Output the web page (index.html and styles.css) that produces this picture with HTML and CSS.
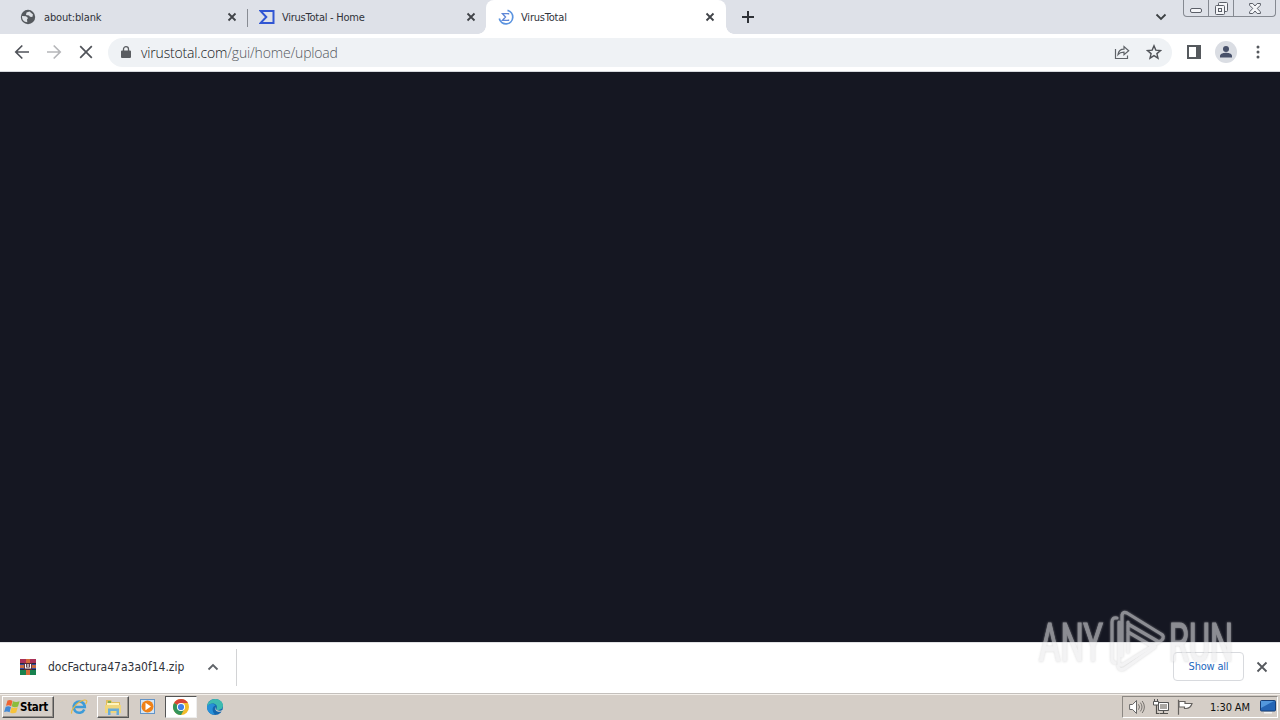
FILE: index.html
```html
<!DOCTYPE html>
<html lang="en">
<head>
    <meta charset="UTF-8">
    <meta name="viewport" content="width=device-width, initial-scale=1.0">
    <title>VirusTotal</title>
    <link rel="stylesheet" href="styles.css">
</head>
<body>
    <div class="tab-strip">
        <div class="tab first">
            <svg class="favicon" viewBox="0 0 16 16"><circle cx="8" cy="8" r="7.2" fill="#55595e"/><path d="M2 7l4 .3 2 1.700-1 1.500.3 2.800C4 13 2 11 2 7zM6.500 3.500l3-1 3.500 3-.7 2.500-2.300-.3-1-1.200-3-.5z" fill="#dee1e6"/></svg>
            <span class="tab-title blank-title">about:blank</span>
            <svg class="tab-close" viewBox="0 0 10 10"><path d="M1.500 1.500l7 7M8.500 1.500l-7 7"/></svg>
        </div>
        <div class="tab second">
            <svg class="favicon" viewBox="0 0 16 16"><path d="M1.500 1.900h13v12.200h-13L7.300 8z" fill="none" stroke="#3156d3" stroke-width="2"/></svg>
            <span class="tab-title home-title">VirusTotal - Home</span>
            <svg class="tab-close" viewBox="0 0 10 10"><path d="M1.500 1.500l7 7M8.500 1.500l-7 7"/></svg>
        </div>
        <div class="tab active">
            <svg class="favicon" viewBox="0 0 16 16"><path d="M9.500 1.400A6.800 6.800 0 1 1 1.300 9.500" fill="none" stroke="#5b94e0" stroke-width="1.700"/><path d="M10.500 5.500V4.600H4.500L7.500 8l-3 3.400h6v-.9" fill="none" stroke="#5f87d6" stroke-width="1.400"/></svg>
            <span class="tab-title vt-title">VirusTotal</span>
            <svg class="tab-close" viewBox="0 0 10 10"><path d="M1.500 1.500l7 7M8.500 1.500l-7 7"/></svg>
        </div>
        <svg class="new-tab" viewBox="0 0 12 12"><path d="M6 0v12M0 6h12" stroke="#2f3237" stroke-width="2"/></svg>
        <svg class="tab-search" viewBox="0 0 12 8"><path d="M1.500 1.500L6 6l4.500-4.500" fill="none" stroke="#3c4043" stroke-width="1.800"/></svg>
        <div class="window-buttons">
            <div class="window-button minimize"><svg width="12" height="5" viewBox="0 0 12 5"><rect x=".5" y=".5" width="11" height="4" rx="1.500"/></svg></div>
            <div class="window-button restore"><svg width="13" height="13" viewBox="0 0 13 13"><rect x="3.500" y=".5" width="9" height="9" rx="1"/><rect x=".5" y="3.500" width="9" height="9" rx="1"/><rect x="3.500" y="6.500" width="3" height="3"/></svg></div>
            <div class="window-button close"><svg width="12" height="11" viewBox="0 0 12 11"><path d="M.6.500h3.200L6 3 8.200.5h3.200v1.800L8.200 5.500l3.200 3.200v1.800H8.200L6 8l-2.200 2.500H.6V8.700l3.200-3.200L.6 2.300z"/></svg></div>
        </div>
    </div>

    <div class="toolbar">
        <svg class="nav-icon back" viewBox="0 0 16 16"><path d="M15 8H2M8.300 1.500L1.800 8l6.500 6.500"/></svg>
        <svg class="nav-icon forward" viewBox="0 0 16 16"><path d="M1 8h13M7.700 1.500L14.200 8l-6.500 6.500"/></svg>
        <svg class="nav-icon stop" viewBox="0 0 16 16"><path d="M2.200 2.200l11.600 11.600M13.800 2.200L2.200 13.800"/></svg>
        <div class="omnibox">
            <svg class="lock" viewBox="0 0 10 12"><path d="M1 4.500h8a1 1 0 0 1 1 1V11a1 1 0 0 1-1 1H1a1 1 0 0 1-1-1V5.500a1 1 0 0 1 1-1z" fill="#5a5d61"/><path d="M2.500 5V3a2.500 2.300 0 0 1 5 0v2" fill="none" stroke="#5a5d61" stroke-width="1.300"/></svg>
            <span class="url"><span class="host">virustotal.com</span>/gui/home/upload</span>
            <svg class="share" viewBox="0 0 16 16"><path d="M1.500 5v9.500h12v-3M4 10.500C4.500 7 6.500 5.200 10 5.200V2.500l4.700 4.200L10 10.800V8.200c-2.800 0-4.600.6-6 2.300z" fill="none" stroke="#5f6368" stroke-width="1.200"/></svg>
            <svg class="star" viewBox="0 0 16 16"><path d="M8 1.800l1.800 4.300 4.700.4-3.600 3.100 1.100 4.600L8 11.700l-4 2.500 1.100-4.600-3.600-3.100 4.700-.4z" fill="none" stroke="#505358" stroke-width="1.400"/></svg>
        </div>
        <svg class="side-panel" viewBox="0 0 14 14"><rect x="1" y="1" width="12" height="12" fill="none" stroke="#55595d" stroke-width="2"/><path d="M9 1h4v12H9z" fill="#55595d"/></svg>
        <svg class="avatar" viewBox="0 0 22 22"><circle cx="11" cy="11" r="11" fill="#dadde3"/><circle cx="11" cy="8" r="3" fill="#475069"/><path d="M5 16.500v-1.700c0-2.300 4-3.100 6-3.100s6 .8 6 3.100v1.700z" fill="#475069"/></svg>
        <svg class="menu" viewBox="0 0 4 14"><circle cx="2" cy="2" r="1.500"/><circle cx="2" cy="7" r="1.500"/><circle cx="2" cy="12" r="1.500"/></svg>
    </div>

    <div class="page"></div>

    <div class="downloads">
        <svg class="zip-icon" viewBox="0 0 16 16">
            <path d="M0 0h16v5H0z" fill="#aa3158"/><path d="M0 5h16v6H0z" fill="#364ca5"/><path d="M0 11h16v5H0z" fill="#18824f"/>
            <path d="M0 4h16v1H0zM0 10h16v1H0z" fill="#26263b"/>
            <path d="M6 0h4v16H6z" fill="#d56b3b"/><path d="M0 6h16v3H0z" fill="#c86b42"/>
            <rect x="4" y="4" width="8" height="7" fill="#552a35"/><path d="M5.500 5v4h5V5M8 5v3" fill="none" stroke="#fff" stroke-width="1.200"/>
        </svg>
        <span class="file-name">docFactura47a3a0f14.zip</span>
        <svg class="file-menu" viewBox="0 0 12 8"><path d="M1.500 6.500L6 2l4.500 4.500" fill="none" stroke="#5f6368" stroke-width="1.800"/></svg>
        <div class="show-all">Show all</div>
        <svg class="shelf-close" viewBox="0 0 12 12"><path d="M1.500 1.500l9 9M10.500 1.500l-9 9" stroke="#55585d" stroke-width="1.800"/></svg>
    </div>

    <div class="taskbar">
        <div class="start-button">
            <svg class="windows-logo" viewBox="0 0 16 16"><path d="M3.500 1.500c2-1 3.500-.7 5 .4L7.200 7.300C5.500 6 4 6 2 6.800z" fill="#ef6432"/><path d="M9 2.300c2 1 4 1 6.600 0l-1.600 5.200c-2 .9-4.300.9-6.300-.2z" fill="#8bbd3d"/><path d="M1.700 7.700c2-.8 3.800-.7 5.300.4l-1.400 5.200C4 12.200 2.200 12.100.1 13z" fill="#4389d5"/><path d="M7.600 8.200c2 1 4.100.9 6.100 0l-1.500 5.400c-2 .9-4.200.9-6.100-.2z" fill="#f7c33b"/></svg>
            <span>Start</span>
        </div>
        <div class="task-item ie">
            <svg viewBox="0 0 18 18"><path d="M14.300 11.500A5.600 5.600 0 1 1 14.800 9H5" fill="none" stroke="#3d9bd8" stroke-width="2.600"/><path d="M2 15.500C-.5 14 7 3 14.500 2c4-.2 1.800 3 1.100 4" fill="none" stroke="#e6b944" stroke-width="1.200"/></svg>
        </div>
        <div class="task-item raised explorer">
            <svg viewBox="0 0 18 18"><path d="M2 2h5l1 2h8v11H2z" fill="#e0bd5c"/><path d="M3 5h12v3H3z" fill="#fff4bd"/><path d="M1 7h16v8H1z" fill="#f0d67c"/><path d="M4 17v-6.500h11V17h-2.500v-4h-6v4z" fill="#69acd8"/><path d="M4 4h3" stroke="#62a94f" stroke-width="1.500"/></svg>
        </div>
        <div class="task-item media">
            <svg viewBox="0 0 18 18"><rect x="1.500" y="1.500" width="14" height="14" fill="#d4e5f5" stroke="#6394c7"/><circle cx="8.500" cy="8.500" r="6" fill="#ef8117"/><path d="M6.500 4.800l5.500 3.700-5.500 3.700z" fill="#fff"/></svg>
        </div>
        <div class="task-item pressed chrome">
            <svg viewBox="0 0 18 18"><circle cx="9" cy="9" r="8" fill="#f3bc2b"/><path d="M9 9L2.070 5A8 8 0 0 1 15.930 5H9z" fill="#d84438"/><path d="M9 9L2.070 5A8 8 0 0 0 9 17l3.400-6z" fill="#34945b"/><circle cx="9" cy="9" r="4.100" fill="#fff"/><circle cx="9" cy="9" r="3.100" fill="#4280e8"/></svg>
        </div>
        <div class="task-item edge">
            <svg viewBox="0 0 18 18"><circle cx="9" cy="9" r="8" fill="#1466ae"/><path d="M1 8.500C1.500 4 5 1 9.300 1c4.500 0 7.700 3 7.700 6.600 0 2.800-2 4.400-4.500 4.400-1.500 0-2.500-.5-2-1.300C12 8 9.500 5.500 7 5.500 4 5.500 2 7 1 8.500z" fill="#3dbbb0"/><path d="M1 8.500C3 5 8 5 9.500 7.500 6 8 5.500 13 9 16.500 4 17 .7 13 1 8.500z" fill="#2790d8"/><path d="M10.300 8.500c-1 1-.8 2.700.5 3.500 2 1.200 5 .8 7.200-.8v1.600c-3 1.600-7 1.200-8.200-.6-.9-1.400-.6-2.900.5-3.700z" fill="#d4d0c8"/></svg>
        </div>
        <div class="tray">
            <svg class="volume" viewBox="0 0 16 16"><path d="M.6 5.500h3L7.500 1.500v13L3.600 10.500h-3z" fill="#fff" stroke="#666"/><path d="M9.500 5.300q2 2.700 0 5.400M11.400 3.600q3.200 4.400 0 8.800M13.200 2q4.400 6 0 12" fill="none" stroke="#77736f"/></svg>
            <svg class="network" viewBox="0 0 16 16"><path d="M5.500 3.500h10v8h-10z" fill="#aaa7a3" stroke="#555"/><path d="M6.500 4.500h8v6h-8z" fill="none" stroke="#fff"/><path d="M7 14.500h8M10.500 12v2M3.500 5v9.500h3" fill="none" stroke="#504e4b" stroke-width="1.200"/><path d="M.5 2.500h5v3.500h-5zM1.500 0v2M4.500 0v2" fill="#fff" stroke="#555"/></svg>
            <svg class="flag" viewBox="0 0 16 16"><path d="M1.500.8v15M2 2.500h6v2h7q-1.500 5-6 5H7.500V8H2z" fill="#fff" stroke="#65625f" stroke-width="1.200"/></svg>
            <span class="clock">1:30 AM</span>
            <svg class="desktop" viewBox="0 0 16 14"><rect x=".5" y=".5" width="15" height="10.500" rx="1" fill="#2565b5" stroke="#173e77"/><path d="M1 1h13L1 8z" fill="#5398dd"/><path d="M4 12h8v1.500H4z" fill="#f2f2f2"/></svg>
        </div>
    </div>

    <svg class="watermark" viewBox="0 0 200 75">
        <g class="watermark-text">
            <text x="3" y="54.500" textLength="64" lengthAdjust="spacingAndGlyphs">ANY</text>
            <text x="133" y="54.500" textLength="64" lengthAdjust="spacingAndGlyphs">RUN</text>
        </g>
        <g class="watermark-logo">
            <path d="M81 12q-5-1-5 4v37q0 3 3 4"/>
            <path d="M86 50V9q1-4 5-2l34 21q4 2 1 6L88 58q-3 2-5 0V16"/>
            <path d="M92 16v30M92 18l31 18M92 26l24 14M119 41L88 63q-5 2-6-3"/>
        </g>
    </svg>
</body>
</html>
```

FILE: styles.css
```css
body {
    margin: 0;
    width: 1280px;
    height: 720px;
    display: flex;
    flex-direction: column;
    position: relative;
    overflow: hidden;
    background: #fff;
    color: #30333a;
    font-family: "DejaVu Sans Condensed", "DejaVu Sans", sans-serif;
    font-size: 11px;
}
svg {
    display: block;
    flex: none;
}
.tab-strip {
    display: flex;
    height: 34px;
    flex: none;
    background: #dee1e8;
}
.tab {
    display: flex;
    align-items: center;
    box-sizing: border-box;
    height: 34px;
}
.first {
    width: 247px;
    padding-left: 20px;
    padding-right: 10px;
}
.second {
    width: 239px;
    padding-left: 12px;
    padding-right: 10px;
    background: linear-gradient(#888c93, #888c93) 0 9px / 1px 18px no-repeat;
}
.active {
    width: 240px;
    padding-left: 12px;
    padding-right: 11px;
    background: #fff;
    border-radius: 8px 8px 0 0;
    position: relative;
}
/* curved feet of the selected tab */
.active::before,
.active::after {
    content: "";
    position: absolute;
    bottom: 0;
    width: 8px;
    height: 8px;
}
.active::before {
    left: -8px;
    background: radial-gradient(circle at 0 0, transparent 7.5px, #fff 8px);
}
.active::after {
    right: -8px;
    background: radial-gradient(circle at 100% 0, transparent 7.5px, #fff 8px);
}
.favicon {
    width: 16px;
    height: 16px;
    margin-right: 7px;
}
.tab-title {
    flex: 1;
    white-space: nowrap;
}
.blank-title {
    padding-left: 1px;
    letter-spacing: -0.15px;
}
.home-title {
    letter-spacing: -0.25px;
}
.vt-title {
    letter-spacing: -0.2px;
}
.tab-close {
    width: 10px;
    height: 10px;
    stroke: #404348;
    stroke-width: 1.8;
}
.new-tab {
    width: 12px;
    height: 12px;
    margin: 11px 0 0 16px;
}
.tab-search {
    width: 12px;
    height: 8px;
    margin: 13px 16px 0 auto;
}
.window-buttons {
    display: flex;
    box-sizing: border-box;
    width: 93px;
    height: 17px;
    margin-right: 4px;
    border: 1px solid #858991;
    border-top: 0;
    border-radius: 0 0 4px 4px;
}
.window-button {
    display: flex;
    justify-content: center;
    align-items: center;
}
.window-button svg {
    fill: #f4f5f8;
    stroke: #5b5f68;
}
.minimize {
    width: 24px;
    padding-top: 4px;
}
.restore {
    width: 24px;
    border-left: 1px solid #858991;
    border-right: 1px solid #858991;
}
.close {
    flex: 1;
}
.toolbar {
    display: flex;
    align-items: center;
    box-sizing: border-box;
    height: 38px;
    flex: none;
    padding: 0 20px 1px 14px;
    border-bottom: 1px solid #d6d8dd;
}
.nav-icon {
    width: 16px;
    height: 16px;
    margin-right: 16px;
    fill: none;
    stroke: #505359;
    stroke-width: 1.7;
}
.forward {
    stroke: #b5b6b9;
}
.stop {
    margin-right: 14px;
}
.omnibox {
    display: flex;
    align-items: center;
    box-sizing: border-box;
    width: 1064px;
    height: 29px;
    padding: 0 10px 0 13px;
    border-radius: 15px;
    background: #eff2f5;
}
.lock {
    width: 10px;
    height: 12px;
    margin-right: 10px;
}
.url {
    flex: 1;
    font: 300 14px "Open Sans", "Noto Sans", sans-serif;
    letter-spacing: -0.17px;
    color: #55595e;
}
.host {
    color: #15171a;
}
.share {
    width: 16px;
    height: 16px;
    margin-right: 16px;
}
.star {
    width: 16px;
    height: 16px;
}
.side-panel {
    width: 14px;
    height: 14px;
    margin: 0 14px 0 15px;
}
.avatar {
    width: 22px;
    height: 22px;
    margin-right: 19px;
}
.menu {
    width: 4px;
    height: 14px;
    fill: #55585d;
}
.page {
    flex: 1;
    background: #151722;
}
.downloads {
    display: flex;
    align-items: center;
    box-sizing: border-box;
    height: 51px;
    flex: none;
    padding: 0 12px 3px 20px;
    background: linear-gradient(#d2d3d5, #d2d3d5) 236px 6px / 1px 37px no-repeat, #fff;
    border-top: 1px solid #e1e2e4;
}
.zip-icon {
    width: 16px;
    height: 16px;
    margin-right: 12px;
}
.file-name {
    width: 137px;
    margin-right: 22px;
    font-size: 12px;
    white-space: nowrap;
}
.file-menu {
    width: 12px;
    height: 8px;
}
.show-all {
    box-sizing: border-box;
    width: 71px;
    height: 29px;
    margin-left: auto;
    margin-right: 12px;
    border: 1px solid #d8dade;
    border-radius: 4px;
    color: #2468bd;
    letter-spacing: -0.2px;
    line-height: 27px;
    text-align: center;
}
.shelf-close {
    width: 12px;
    height: 12px;
}
.taskbar {
    display: flex;
    align-items: flex-start;
    box-sizing: border-box;
    height: 27px;
    flex: none;
    padding: 2px 2px 0;
    background: #d5cec7;
    border-top: 1px solid #c4c0bc;
    box-shadow: inset 0 1px #f4f0eb;
}
.start-button {
    display: flex;
    align-items: center;
    box-sizing: border-box;
    width: 52px;
    height: 22px;
    padding-left: 1px;
    border: 1px solid;
    border-color: #fff #555 #555 #fff;
    box-shadow: inset -1px -1px #96918b;
    color: #000;
    font: bold 11.5px "DejaVu Sans Condensed", "DejaVu Sans", sans-serif;
    letter-spacing: -0.3px;
}
.windows-logo {
    width: 16px;
    height: 16px;
}
.task-item {
    display: flex;
    align-items: center;
    justify-content: center;
    box-sizing: border-box;
    height: 22px;
    width: 32px;
    border: 1px solid transparent;
}
.task-item svg {
    width: 18px;
    height: 18px;
}
.ie {
    margin-left: 9px;
}
.explorer {
    margin-left: 2px;
}
.media {
    margin-left: 3px;
}
.chrome {
    margin-left: 1px;
}
.edge {
    margin-left: 2px;
}
.raised {
    border-color: #fff #555 #555 #fff;
    box-shadow: inset -1px -1px #96918b;
}
.pressed {
    background: #fff;
    border-color: #555 #eee #eee #555;
}
.tray {
    display: flex;
    align-items: center;
    box-sizing: border-box;
    width: 156px;
    height: 22px;
    margin-left: auto;
    padding-left: 6px;
    border: 1px solid;
    border-color: #8c8883 #fff #fff #8c8883;
    color: #111;
}
.volume,
.network,
.flag {
    width: 16px;
    height: 16px;
    margin-right: 8px;
}
.clock {
    width: 43px;
    margin: 0 7px 0 9px;
    white-space: nowrap;
    letter-spacing: -0.1px;
}
.desktop {
    width: 16px;
    height: 14px;
}
/* sits over both the page and the download shelf */
.watermark {
    position: absolute;
    left: 1036px;
    top: 606px;
    width: 200px;
    height: 75px;
    opacity: 0.56;
    pointer-events: none;
    filter: drop-shadow(0 0 1px #bbb);
}
.watermark-text {
    fill: #eaeaec;
    stroke: #eaeaec;
    stroke-width: 1.2;
    font: 53px "Roboto", sans-serif;
}
.watermark-logo {
    fill: none;
    stroke: #eaeaec;
    stroke-width: 3.2;
    stroke-linecap: round;
    stroke-linejoin: round;
}
```
